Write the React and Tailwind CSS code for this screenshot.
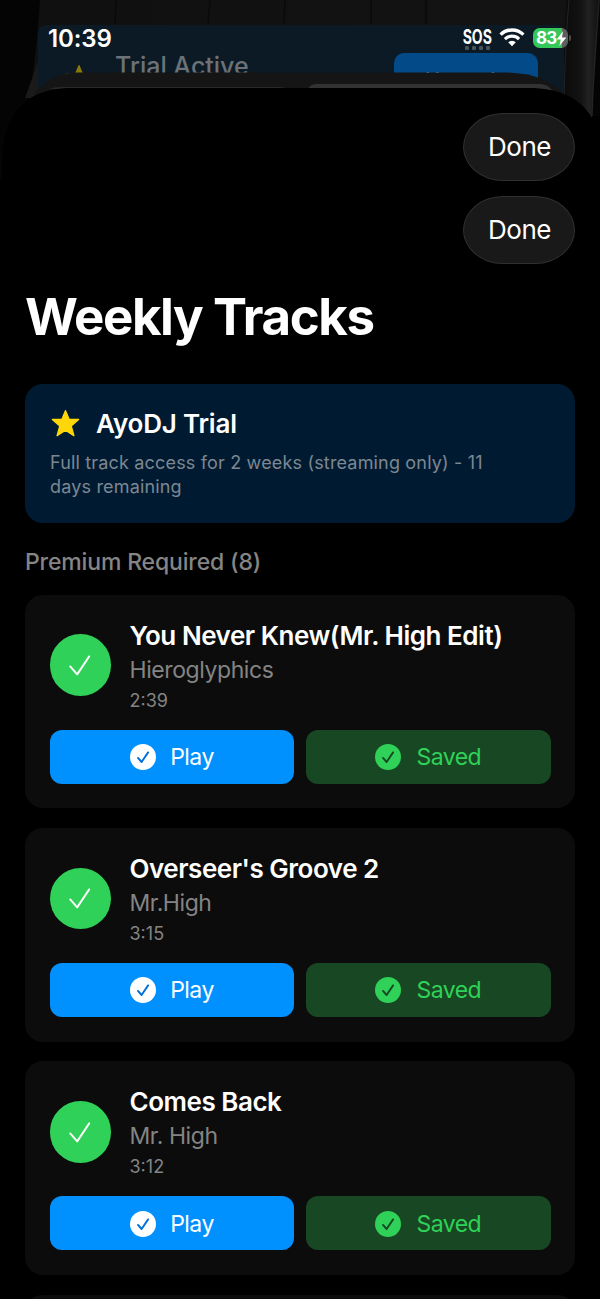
const TRACKS = [
  { title: "You Never Knew(Mr. High Edit)", artist: "Hieroglyphics", length: "2:39" },
  { title: "Overseer's Groove 2", artist: "Mr.High", length: "3:15" },
  { title: "Comes Back", artist: "Mr. High", length: "3:12" },
];

function Star({ className }) {
  return (
    <svg viewBox="0 0 28 27" className={className} aria-hidden="true">
      <path
        d="M14 1.6 17.4 9.7H26.2L19.3 15.7 21.8 24.8 14 19.6 6.2 24.8 8.7 15.7 1.8 9.7H10.6Z"
        fill="currentColor"
        stroke="currentColor"
        strokeWidth="1.3"
        strokeLinejoin="round"
      />
    </svg>
  );
}

function CheckBadge({ fill, mark }) {
  return (
    <svg viewBox="0 0 26 26" className="size-[26px] shrink-0" aria-hidden="true">
      <circle cx="13" cy="13" r="13" className={fill} />
      <path d="M8 13.9 11.6 18 18.1 8.4" fill="none" strokeWidth="1.9" strokeLinecap="round" strokeLinejoin="round" className={mark} />
    </svg>
  );
}

function Wallpaper() {
  return (
    <svg viewBox="0 0 600 180" className="absolute top-0 left-0 h-[180px] w-[600px]" aria-hidden="true">
      <defs>
        <linearGradient id="wall" x1="0" x2="1" y1="0" y2="0">
          <stop offset="0" stopColor="#101010" />
          <stop offset="1" stopColor="#131313" />
        </linearGradient>
        <linearGradient id="edge" x1="0" x2="1" y1="0" y2="0">
          <stop offset="0" stopColor="#0a0a0a" />
          <stop offset="0.5" stopColor="#131313" />
          <stop offset="0.7" stopColor="#222222" />
          <stop offset="1" stopColor="#0e0e0e" />
        </linearGradient>
      </defs>
      <rect width="600" height="180" fill="#040404" />
      <path d="M40 0H570V130H24C32 85 37 50 40 0Z" fill="url(#wall)" />
      <path d="M38 62V98H25Z" fill="#1a1a1a" />
      <path d="M566 0H600C597 40 594 80 592 118L562 100Z" fill="url(#edge)" />
      <path d="M569 0C566 35 565 65 564 98M599 0C596 40 593 80 592 118" fill="none" stroke="#2b2b2b" strokeWidth="0.8" />
      <path d="M116 0 115 24M210 0 208 24M285 0 284 24M371 0V24M426 0V24" fill="none" stroke="#0a0a0a" strokeWidth="1.5" />
    </svg>
  );
}

function SheetEdges() {
  return (
    <svg viewBox="0 0 600 180" className="absolute top-0 left-0 h-[180px] w-[600px]" aria-hidden="true">
      <path d="M34 94C46 80 58 72.500 82 72.500H505C532 73 550 80 562 92V110H34Z" fill="#151515" />
      <path d="M50 89Q54 87 60 87H280Q284 87 287 89Z" fill="#292929" />
      <path d="M308 89Q310 84 317 84H540Q547 84 552 90Z" fill="#323232" />
      <path d="M2 180V166C2 128 14 88 72 88H528C560 88 580 98 592 118L600 150V180Z" fill="#000000" />
      <path d="M592 116V180H600V116Z" fill="#000000" />
    </svg>
  );
}

function StatusBar() {
  return (
    <div className="flex h-[88px] items-start justify-between pt-[26px] pr-[29px] pl-12 text-white">
      <span className="text-[24px] leading-[26px] font-semibold tracking-[-0.1px]">10:39</span>
      <div className="flex items-start">
        <div className="flex w-[31px] flex-col items-center">
          <span className="-mb-px h-[21px] scale-x-[0.72] text-[19.5px] leading-[22px] font-bold">SOS</span>
          <div className="flex gap-[3px]">
            <i className="size-1 rounded-[1px] bg-[#4b535a]" />
            <i className="size-1 rounded-[1px] bg-[#4b535a]" />
            <i className="size-1 rounded-[1px] bg-[#4b535a]" />
            <i className="size-1 rounded-[1px] bg-[#4b535a]" />
          </div>
        </div>
        <svg viewBox="0 0 26 19" className="mt-[2px] ml-[6px] h-[19px] w-[26px]" aria-hidden="true">
          <path d="M1.6 6.6A16.3 16.3 0 0 1 24.4 6.6" fill="none" stroke="white" strokeWidth="3.4" />
          <path d="M5.9 11.1A10.2 10.2 0 0 1 20.1 11.1" fill="none" stroke="white" strokeWidth="3.2" />
          <path d="M9.2 14.3A5.5 5.5 0 0 1 16.8 14.3L13 18.2Z" fill="white" />
        </svg>
        <div className="mt-[2px] ml-[8px] flex items-center">
          <div className="relative flex h-5 w-[35px] items-center rounded-[6.5px] bg-linear-to-r from-[#34c759] from-82% to-[#5c605d] to-82% pl-[3px]">
            <span className="text-[17px] leading-5 font-bold tracking-[-0.8px]">83</span>
            <svg viewBox="0 0 10 14" className="absolute top-[3px] right-[1px] h-[15px] w-[11px]" aria-hidden="true">
              <path d="M6.5 0 0.5 8H4.3L3 14 9.5 6H5.4Z" fill="white" />
            </svg>
          </div>
          <i className="ml-[1px] h-[6px] w-[2px] rounded-r-full bg-[#4c4c4c]" />
        </div>
      </div>
    </div>
  );
}

function TrialBackdrop() {
  return (
    <div className="absolute top-[25px] left-[38px] flex h-[71px] w-[526px] items-start overflow-hidden rounded-t-[8px] bg-[#0b1a25] pl-[26px]">
      <Star className="mt-[39px] h-[29px] w-[30px] text-[#8a7a08]" />
      <span className="mt-[25px] ml-[21px] text-[25px] leading-[32px] font-medium text-[#6c7277]">Trial Active</span>
      <div className="mt-[28px] mr-[26px] ml-auto flex h-[50px] w-[144px] justify-center rounded-[10px] bg-[#034a88] pt-[15px] text-[20px] leading-[25px] text-[#a5b5c5]">
        Upgrade
      </div>
    </div>
  );
}

function DoneButton() {
  return (
    <button className="h-[68px] w-[112px] rounded-[40px_/_34px] border border-[#303030] bg-[#191919] pl-px text-[26px] tracking-[-0.5px] text-white">
      Done
    </button>
  );
}

function TrackCard({ title, artist, length }) {
  return (
    <article className="h-[213.8px] shrink-0 rounded-[18px] bg-[#0c0c0c] px-[24.5px] pt-6">
      <div className="flex h-[93px] items-center gap-[18.5px]">
        <div className="flex size-[61.5px] shrink-0 items-center justify-center rounded-full bg-[#30d158]">
          <svg viewBox="0 0 24 24" className="size-6" aria-hidden="true">
            <path d="M2.2 13.4 9.2 21.4 21.2 3.4" fill="none" stroke="white" strokeWidth="1.9" strokeLinecap="round" strokeLinejoin="round" />
          </svg>
        </div>
        <div className="pt-[2px]">
          <h2 className="text-[26px] leading-[32px] font-semibold tracking-[-0.47px] text-white">{title}</h2>
          <p className="mt-[4px] text-[23px] leading-[28px] tracking-[-0.42px] text-[#848484]">{artist}</p>
          <p className="mt-[5px] text-[18px] leading-[24px] text-[#848484]">{length}</p>
        </div>
      </div>
      <div className="mt-[18px] grid h-[54px] grid-cols-2 gap-[12px] text-[23px] tracking-[-0.55px]">
        <button className="flex items-center justify-center gap-[14.5px] rounded-[12px] bg-[#0091ff] pt-px text-white">
          <CheckBadge fill="fill-white" mark="stroke-[#0070d8]" />
          Play
        </button>
        <button className="flex items-center justify-center gap-[15px] rounded-[12px] bg-[#184823] pt-px text-[#30d158]">
          <CheckBadge fill="fill-[#30d158]" mark="stroke-[#184823]" />
          Saved
        </button>
      </div>
    </article>
  );
}

export default function App() {
  return (
    <div className="relative h-[1299px] w-[600px] overflow-hidden bg-black font-['Inter',sans-serif]">
      <Wallpaper />
      <TrialBackdrop />
      <SheetEdges />
      <div className="relative">
        <StatusBar />
        <main className="flex flex-col px-[25px]">
          <div className="mt-[24.5px] flex flex-col items-end gap-[15px]">
            <DoneButton />
            <DoneButton />
          </div>
          <h1 className="mt-[23px] text-[51px] leading-[60px] font-bold tracking-[-1.4px] text-white">Weekly Tracks</h1>
          <section className="mt-[37px] h-[139px] rounded-[18px] bg-[#001b31] px-[25px] pt-[24px]">
            <div className="flex items-center gap-[15px]">
              <Star className="h-[29px] w-[31px] text-[#ffd60a]" />
              <h2 className="text-[26px] leading-[32px] font-semibold tracking-[-0.2px] text-white">AyoDJ Trial</h2>
            </div>
            <p className="mt-[11px] text-[18px] leading-[24.5px] tracking-[0.17px] text-[#7d8791]">
              Full track access for 2 weeks (streaming only) - 11
              <br />
              days remaining
            </p>
          </section>
          <h3 className="mt-[24px] text-[23px] leading-[30px] font-medium tracking-[-0.15px] text-[#858585]">Premium Required (8)</h3>
          <div className="mt-[18px] flex flex-col gap-[19.6px]">
            {TRACKS.map((track) => (
              <TrackCard key={track.title} {...track} />
            ))}
            <div className="h-10 rounded-[18px] bg-[#0c0c0c]" />
          </div>
        </main>
      </div>
    </div>
  );
}
